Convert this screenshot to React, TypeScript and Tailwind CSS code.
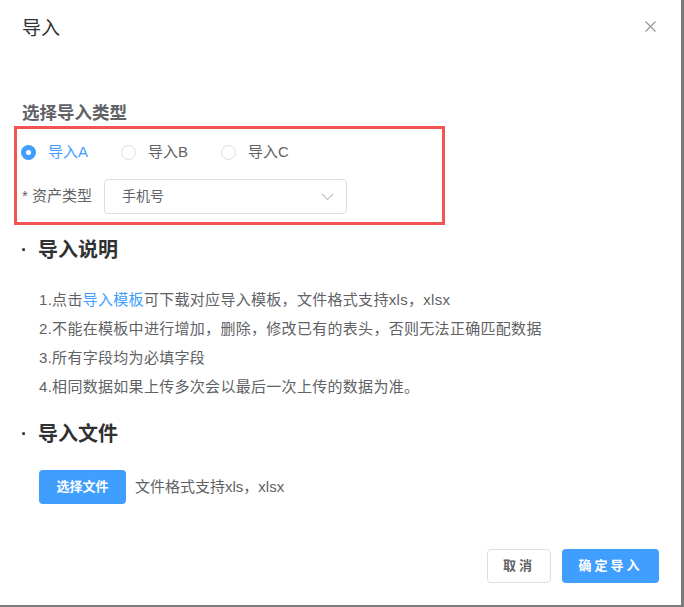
import React from 'react';

const font = '[font-family:"Liberation_Sans","Noto_Sans_CJK_SC",sans-serif]';

const Radio: React.FC<{ label: string; checked?: boolean }> = ({ label, checked }) => (
  <label className="flex items-center gap-[12px]">
    {checked ? (
      <span className="w-[15px] h-[15px] rounded-full bg-[#409eff] flex items-center justify-center">
        <span className="w-[5px] h-[5px] rounded-full bg-white" />
      </span>
    ) : (
      <span className="w-[15px] h-[15px] rounded-full border border-[#dcdfe6] bg-white" />
    )}
    <span className={`text-[15px] leading-5 ${checked ? 'text-[#409eff]' : 'text-[#606266]'}`}>{label}</span>
  </label>
);

const notes = [
  null,
  '2.不能在模板中进行增加，删除，修改已有的表头，否则无法正确匹配数据',
  '3.所有字段均为必填字段',
  '4.相同数据如果上传多次会以最后一次上传的数据为准。',
];

const Section: React.FC<{ title: string; className?: string }> = ({ title, className }) => (
  <div className={`flex items-center h-[26px] pl-[21px] ${className ?? ''}`}>
    <span className="w-[17px] text-[18px] font-bold text-[#303133]">·</span>
    <span className="text-[20px] leading-[26px] font-bold text-[#303133]">{title}</span>
  </div>
);

export default function App() {
  return (
    <div className={`w-[684px] h-[607px] bg-[#7a7a7a] ${font}`}>
      <div className="w-[681px] h-[605px] bg-white flex flex-col">
        {/* header */}
        <div className="flex items-start justify-between pl-[22px] pr-[25px] pt-[17px]">
          <span className="text-[19px] text-[#303133] leading-6">导入</span>
          <svg width="11" height="11" viewBox="0 0 11 11" className="mt-[4px]">
            <path d="M0.5 0.5L10.5 10.5M10.5 0.5L0.5 10.5" stroke="#909399" strokeWidth="1.1" />
          </svg>
        </div>

        <div className="pl-[22px] mt-[62px]">
          <div className="text-[17.5px] font-bold text-[#606266] leading-5">选择导入类型</div>
        </div>

        {/* highlighted block */}
        <div className="ml-[14px] mt-[3px] w-[431px] h-[99px] border-[3px] border-[#f25454] flex flex-col">
          <div className="flex items-center gap-[33px] pl-[4px] pt-[13px]">
            <Radio label="导入A" checked />
            <Radio label="导入B" />
            <Radio label="导入C" />
          </div>
          <div className="flex items-center pl-[5px] mt-[17px]">
            <span className="text-[15px] text-[#606266] w-[82px]">* 资产类型</span>
            <div className="w-[243px] h-[35px] border border-[#dcdfe6] rounded-[4px] flex items-center justify-between pl-[17px] pr-[12px]">
              <span className="text-[14px] text-[#606266]">手机号</span>
              <svg width="13" height="8" viewBox="0 0 13 8">
                <path d="M1 1L6.5 6.5L12 1" stroke="#c0c4cc" strokeWidth="1.2" fill="none" />
              </svg>
            </div>
          </div>
        </div>

        <Section title="导入说明" className="mt-[12px]" />

        <div className="pl-[39px] mt-[27px] flex flex-col gap-[9px]">
          {notes.map((n, i) => (
            <div key={i} className="text-[15px] tracking-[0.3px] text-[#606266] leading-5">
              {n ?? (
                <>
                  1.点击<span className="text-[#409eff]">导入模板</span>可下载对应导入模板，文件格式支持xls，xlsx
                </>
              )}
            </div>
          ))}
        </div>

        <Section title="导入文件" className="mt-[24px]" />

        <div className="flex items-center pl-[39px] mt-[23px] gap-[9px]">
          <button className="w-[87px] h-[34px] rounded-[4px] bg-[#409eff] text-white text-[13px] font-bold">
            选择文件
          </button>
          <span className="text-[15px] text-[#606266]">文件格式支持xls，xlsx</span>
        </div>

        <div className="flex-1" />

        <div className="flex justify-end gap-[11px] pr-[22px] pb-[22px]">
          <button className="w-[64px] h-[34px] rounded-[4px] border border-[#dcdfe6] bg-white text-[13px] text-[#606266] tracking-[3px] font-bold">
            取消
          </button>
          <button className="w-[97px] h-[34px] rounded-[4px] bg-[#409eff] text-white text-[13px] font-bold tracking-[3px]">
            确定导入
          </button>
        </div>
      </div>
    </div>
  );
}
